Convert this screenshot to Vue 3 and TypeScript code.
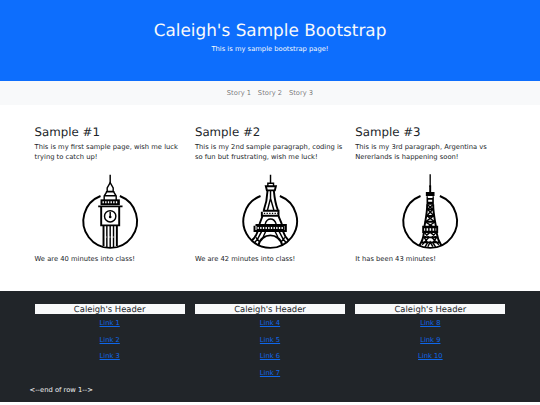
<script setup lang="ts">
  import { ref } from "vue"

  interface Story {
    title: string
    lines: string[]
    icon: string
    caption: string
  }

  const navLinks = ref(["Story 1", "Story 2", "Story 3"])

  const stories = ref<Story[]>([
    {
      title: "Sample #1",
      lines: ["This is my first sample page, wish me luck", "trying to catch up!"],
      icon: "clock",
      caption: "We are 40 minutes into class!"
    },
    {
      title: "Sample #2",
      lines: ["This is my 2nd sample paragraph, coding is", "so fun but frustrating, wish me luck!"],
      icon: "eiffel",
      caption: "We are 42 minutes into class!"
    },
    {
      title: "Sample #3",
      lines: ["This is my 3rd paragraph, Argentina vs", "Nererlands is happening soon!"],
      icon: "tokyo",
      caption: "It has been 43 minutes!"
    }
  ])

  const footerColumns = ref([
    ["Link 1", "Link 2", "Link 3"],
    ["Link 4", "Link 5", "Link 6", "Link 7"],
    ["Link 8", "Link 9", "Link 10"]
  ])
</script>

<template>
  <div class="page">
    <header class="hero">
      <h1>Caleigh's Sample Bootstrap</h1>
      <p>This is my sample bootstrap page!</p>
    </header>

    <nav class="navbar">
      <a v-for="link in navLinks" :key="link" class="nav-link">{{ link }}</a>
    </nav>

    <main class="container stories">
      <div class="row">
        <section v-for="story in stories" :key="story.title" class="col">
          <h3>{{ story.title }}</h3>
          <p><template v-for="(line, i) in story.lines" :key="line"><br v-if="i > 0" />{{ line }}</template></p>

          <svg class="tower" viewBox="-19.5 -2 253 253">
            <path class="line" d="M136 79 A80.5 80.5 0 1 1 78 79" />

            <g v-if="story.icon === 'clock'">
              <path class="line thin" d="M107 15V42" />
              <path class="line thin" d="M107 39L98 55V65H116V55Z" />
              <path class="line thin" d="M97 66L89 79V91M117 66L125 79V91M90 78H124M94 66H120" />
              <path class="solid" d="M78 89H136V106H78Z" />
              <path class="gap" d="M84 98H131" stroke-dasharray="4 4" />
              <path class="line" d="M71 110H144M80 111V167H134V111" />
              <circle class="line thin" cx="107" cy="140" r="17" />
              <path class="line thin" d="M107 127V142" />
              <circle class="solid" cx="107" cy="142" r="4" />
              <path class="line" d="M87 169V229M127 169V229" />
              <path class="line thin" d="M97 169V234M107 169V234M117 169V234" />
              <path class="gap fine" d="M91 202H124" stroke-dasharray="6 5" />
            </g>

            <g v-else-if="story.icon === 'eiffel'">
              <path class="line thin" d="M108 15V42M100 50V41H117V50" />
              <path class="line" d="M94 50H124L121 62H97Z" />
              <path class="line" d="M99 63C98 86 94 104 88 121M118 63C120 86 123 104 130 121" />
              <path class="line thin" d="M108 64V88M108 86L99 121M108 86L118 121" />
              <path class="line" d="M85 123H132V138H82V126" />
              <path class="line thin" d="M88 131H130" stroke-dasharray="4 4" />
              <path class="line" d="M84 139L75 163M132 139L142 163" />
              <path class="line thin" d="M92 163C98 143 118 143 125 163" />
              <path class="line" d="M63 166H154V184H60V168" />
              <path class="solid" d="M66 169H150V181H66Z" />
              <path class="gap" d="M69 175H148" stroke-dasharray="4 4" />
              <path class="line" d="M69 186C65 199 60 206 51 213M146 186C150 199 156 206 163 213" />
              <path class="line" d="M72 227C80 187 135 187 143 227" />
              <path class="line thin" d="M81 186L70 207L60 219M134 186L145 207L155 219M64 203L75 216M151 203L140 216M93 186L86 202M122 186L130 202" />
            </g>

            <g v-else>
              <path class="line fine" d="M107 14V52" />
              <path class="line" d="M107 47V69" />
              <path class="solid" d="M94 67H120V79H94ZM96 80H118V105H96Z" />
              <path class="gap" d="M100 82H114M101 93H113" />
              <path class="line" d="M98 104C98 130 93 150 90 169M116 104C116 130 121 150 124 169M96 119H118M93 139H121M91 156H123" />
              <path class="line thin" d="M99 105L115 119L97 138L121 157L103 169M115 105L99 119L118 138L93 157L113 169" />
              <path class="line" d="M86 171H128V187H86Z" />
              <path class="solid" d="M86 171H128V176H86ZM86 183H128V187H86Z" />
              <path class="line thin" d="M94 173V186M103 173V186M112 173V186M121 173V186" />
              <path class="line" d="M88 188C87 203 82 217 74 228M126 188C128 203 134 217 141 228M84 203H131M79 218H136" />
              <path class="line thin" d="M89 188L103 203L83 225M106 188L89 203L99 219L91 233M107 188L126 203L115 219L124 233M125 188L112 203L133 225M100 231L107 217L115 231" />
            </g>
          </svg>

          <p>{{ story.caption }}</p>
        </section>
      </div>
    </main>

    <footer class="footer">
      <div class="container">
        <div class="row">
          <div v-for="(links, i) in footerColumns" :key="i" class="col">
            <h5>Caleigh's Header</h5>
            <p v-for="link in links" :key="link"><a href="#">{{ link }}</a></p>
          </div>
        </div>
        <p>&lt;--end of row 1--&gt;</p>
      </div>
    </footer>
  </div>
</template>

<style>
body {
  margin: 0;
  background: #fff;
  overflow: hidden;
}
</style>

<style scoped>
.page {
  font-family: "DejaVu Sans", sans-serif;
  font-size: 6.75px;
  line-height: 1.5;
  color: #212529;
  text-rendering: geometricPrecision;
}
h1, h3, h5 {
  margin: 0 0 3.375px;
  font-weight: 400;
  line-height: 1.2;
}
h1 {
  font-size: 16.875px;
}
h3 {
  font-size: 11.8125px;
}
h5 {
  font-size: 8.4375px;
}
p {
  margin: 0 0 6.8px;
}
.hero {
  box-sizing: border-box;
  height: 81px;
  padding-top: 20.25px;
  background: #0d6efd;
  color: #f8f9fa;
  text-align: center;
}
.hero p {
  margin: 0;
}
.navbar {
  display: flex;
  justify-content: center;
  padding: 3.6px 0;
  background: #f8f9fa;
}
.nav-link {
  padding: 3.375px;
  color: rgba(0, 0, 0, 0.55);
}
.container {
  width: 480.94px;
  margin: 0 auto;
}
.row {
  display: flex;
}
.col {
  flex: 1 1 0;
  min-width: 0;
  padding: 0 5.0625px;
  white-space: nowrap;
}
.stories {
  padding: 19.6px 0 20.1px;
}
.tower {
  display: block;
  width: 84.375px;
  height: 84.375px;
  margin: 0 auto;
}
.line {
  fill: none;
  stroke: #000;
  stroke-width: 5.8;
}
.thin {
  stroke-width: 4.3;
}
.line.fine {
  stroke-width: 4;
}
.solid {
  fill: #000;
}
.gap {
  fill: none;
  stroke: #fff;
  stroke-width: 6;
}
.gap.fine {
  stroke-width: 2;
}
.footer {
  padding: 13.5px 0 0;
  background: #212529;
  color: #f1f1f2;
}
.footer .container {
  padding-bottom: 6.75px;
}
.footer .container > p {
  margin: 0;
}
.footer .col {
  text-align: center;
}
.footer h5 {
  background: #f8f9fa;
  color: #212529;
}
.footer a {
  color: #0f67ea;
}
</style>
